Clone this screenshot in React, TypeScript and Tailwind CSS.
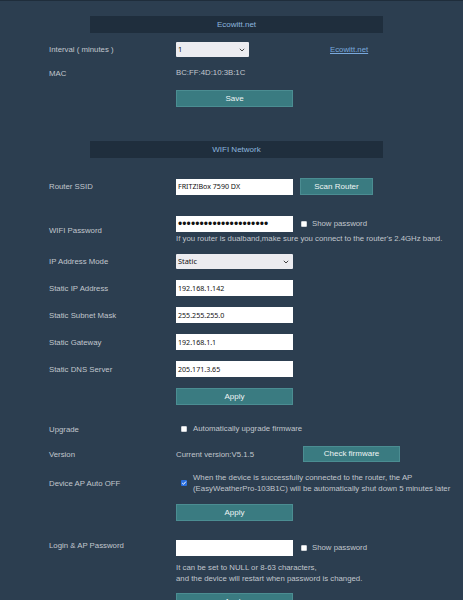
import React from "react";

const sans = { fontFamily: '"Liberation Sans", Arial, sans-serif' };

function Header({ title }: { title: string }) {
  return (
    <div className="ml-[41px] w-[293px] h-[17px] bg-[#1f2e3d] flex items-center justify-center text-[8px] text-[#8db6df]">
      {title}
    </div>
  );
}

function Row({
  label,
  children,
  className = "",
  align = "items-center",
}: {
  label: string;
  children: React.ReactNode;
  className?: string;
  align?: string;
}) {
  return (
    <div className={`flex ${align} ${className}`}>
      <div className="w-[127px] shrink-0 text-[7.8px] leading-[11px] text-[#c1c6cd]">{label}</div>
      <div className="flex items-center">{children}</div>
    </div>
  );
}

function TextBox({ value, w = "w-[117px]" }: { value: string; w?: string }) {
  return (
    <div
      className={`${w} h-[16px] bg-white flex items-center px-[2px] text-[7.1px] text-[#111]`}
      style={{ fontFamily: '"Noto Sans", sans-serif' }}
    >
      {value}
    </div>
  );
}

function SelectBox({ value, w }: { value: string; w: string }) {
  return (
    <div
      className={`${w} h-[15px] bg-[#ececf0] rounded-[1px] flex items-center justify-between pl-[2px] pr-[4px] text-[7.4px] text-[#111]`}
      style={{ fontFamily: '"Noto Sans", sans-serif' }}
    >
      <span>{value}</span>
      <svg width="6" height="4" viewBox="0 0 6 4">
        <path d="M0.8 0.8 L3 3 L5.2 0.8" fill="none" stroke="#444" strokeWidth="1" />
      </svg>
    </div>
  );
}

function Btn({ text, w = "w-[117px]", h = "h-[17px]" }: { text: string; w?: string; h?: string }) {
  return (
    <div
      className={`${w} ${h} bg-[#3a7b81] border border-[#4b8d92] flex items-center justify-center text-[8px] text-[#eef4f4]`}
    >
      {text}
    </div>
  );
}

function Check({ checked = false }: { checked?: boolean }) {
  return checked ? (
    <div className="w-[6px] h-[6px] bg-[#2a6fe0] rounded-[1px] flex items-center justify-center">
      <svg width="6" height="6" viewBox="0 0 6 6">
        <path d="M1.2 3 L2.5 4.3 L4.9 1.6" fill="none" stroke="#fff" strokeWidth="1" />
      </svg>
    </div>
  ) : (
    <div className="w-[6px] h-[6px] bg-white border border-[#cfd3d8] rounded-[1px]" />
  );
}

function ShowPw() {
  return (
    <div className="flex items-center ml-[8px] text-[7.8px] text-[#c1c6cd]">
      <Check />
      <span className="ml-[5px]">Show password</span>
    </div>
  );
}

export default function App() {
  return (
    <div className="min-h-screen w-full bg-[#2c3e50] border-t border-[#1f2d3b]" style={sans}>
      <div className="pl-[49px] flex flex-col">
        <div className="mt-[15px]">
          <Header title="Ecowitt.net" />
        </div>

        <Row label="Interval ( minutes )" className="mt-[9px] h-[15px]">
          <SelectBox value="1" w="w-[73px]" />
          <a className="ml-[81px] text-[7.8px] text-[#7aa9dd] underline">Ecowitt.net</a>
        </Row>

        <Row label="MAC" className="mt-[10px] h-[12px]">
          <span className="text-[7.8px] text-[#c1c6cd]">BC:FF:4D:10:3B:1C</span>
        </Row>

        <div className="ml-[127px] mt-[11px]">
          <Btn text="Save" />
        </div>

        <div className="mt-[34px]">
          <Header title="WIFI Network" />
        </div>

        <Row label="Router SSID" className="mt-[20px] h-[17px]">
          <TextBox value="FRITZ!Box 7590 DX" />
          <div className="ml-[7px]">
            <Btn text="Scan Router" w="w-[73px]" />
          </div>
        </Row>

        <Row label="WIFI Password" className="mt-[21px]">
          <div className="flex flex-col">
            <div className="flex items-center">
              <div className="w-[117px] h-[16px] bg-white flex items-center px-[2px] overflow-hidden">
                <span className="text-[12px] leading-[12px] text-[#111] tracking-[0.1px]">
                  •••••••••••••••••••••
                </span>
              </div>
              <ShowPw />
            </div>
            <div className="mt-[1px] text-[7.8px] leading-[11px] text-[#c1c6cd] whitespace-nowrap">
              If you router is dualband,make sure you connect to the router's 2.4GHz band.
            </div>
          </div>
        </Row>

        <Row label="IP Address Mode" className="mt-[10px] h-[15px]">
          <SelectBox value="Static" w="w-[117px]" />
        </Row>

        <Row label="Static IP Address" className="mt-[11px] h-[16px]">
          <TextBox value="192.168.1.142" />
        </Row>
        <Row label="Static Subnet Mask" className="mt-[11px] h-[16px]">
          <TextBox value="255.255.255.0" />
        </Row>
        <Row label="Static Gateway" className="mt-[11px] h-[16px]">
          <TextBox value="192.168.1.1" />
        </Row>
        <Row label="Static DNS Server" className="mt-[11px] h-[16px]">
          <TextBox value="205.171.3.65" />
        </Row>

        <div className="ml-[127px] mt-[11px]">
          <Btn text="Apply" />
        </div>

        <Row label="Upgrade" className="mt-[18px] h-[12px]">
          <div className="ml-[5px] flex items-center text-[7.8px] text-[#c1c6cd]">
            <Check />
            <span className="ml-[6px]">Automatically upgrade firmware</span>
          </div>
        </Row>

        <Row label="Version" className="mt-[11px] h-[16px]">
          <span className="w-[127px] text-[7.8px] text-[#c1c6cd] mt-[2px]">Current version:V5.1.5</span>
          <Btn text="Check firmware" w="w-[97px]" h="h-[16px]" />
        </Row>

        <Row label="Device AP Auto OFF" className="mt-[10px]">
          <div className="ml-[5px] flex items-center">
            <Check checked />
            <div className="ml-[6px] text-[7.8px] leading-[11px] text-[#c1c6cd] whitespace-nowrap">
              When the device is successfully connected to the router, the AP
              <br />
              (EasyWeatherPro-103B1C) will be automatically shut down 5 minutes later
            </div>
          </div>
        </Row>

        <div className="ml-[127px] mt-[10px]">
          <Btn text="Apply" />
        </div>

        <Row label="Login & AP Password" className="mt-[19px]" align="items-start">
          <div className="flex flex-col">
            <div className="flex items-center">
              <TextBox value="" />
              <ShowPw />
            </div>
            <div className="mt-[6px] text-[7.8px] leading-[11px] text-[#c1c6cd] whitespace-nowrap">
              It can be set to NULL or 8-63 characters,
              <br />
              and the device will restart when password is changed.
            </div>
          </div>
        </Row>

        <div className="ml-[127px] mt-[9px] mb-[20px]">
          <Btn text="Apply" />
        </div>
      </div>
    </div>
  );
}
